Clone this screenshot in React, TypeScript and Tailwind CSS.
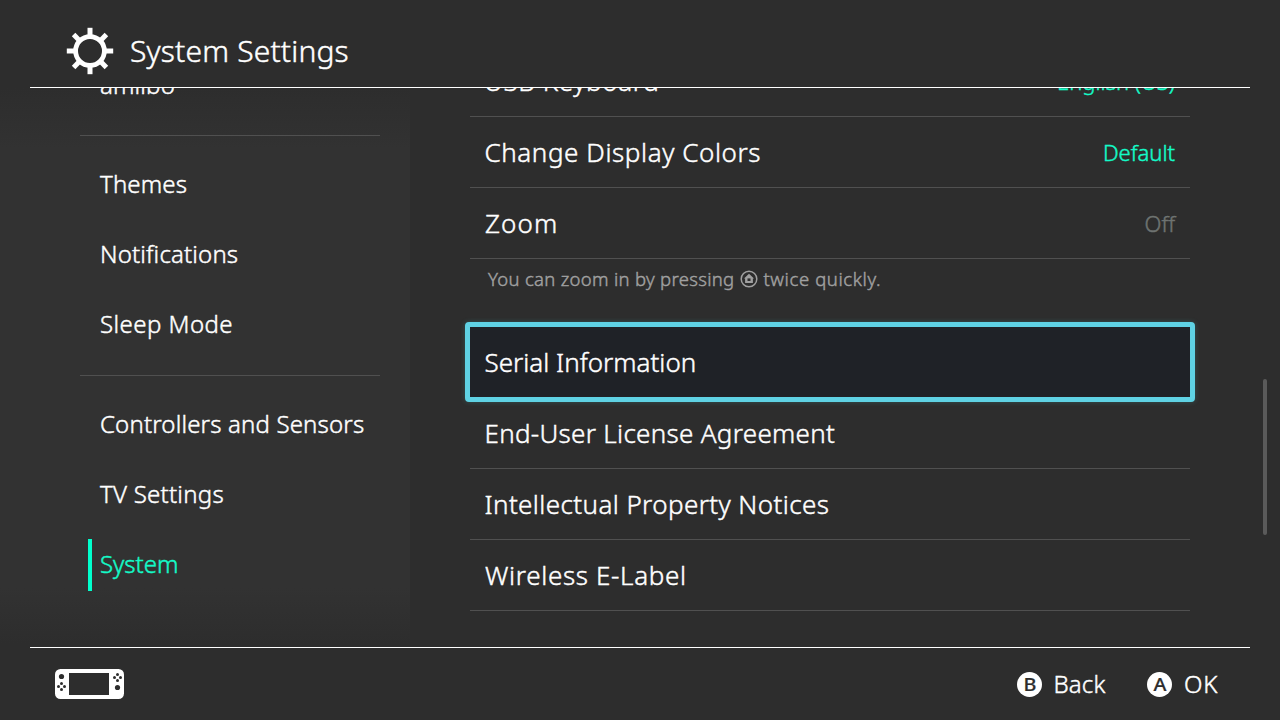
import type { ReactNode } from 'react';

type NavEntry = { label: string; text: string; active?: boolean } | { divider: true };

const nav: NavEntry[] = [
  { label: 'amiibo', text: 'pl-5 pt-0.5 tracking-[0.15px]' },
  { divider: true },
  { label: 'Themes', text: 'pl-5 tracking-[0.15px]' },
  { label: 'Notifications', text: 'pl-5 tracking-[0.16px]' },
  { label: 'Sleep Mode', text: 'pl-5 tracking-[0.45px]' },
  { divider: true },
  { label: 'Controllers and Sensors', text: 'pl-5 tracking-[0.16px]' },
  { label: 'TV Settings', text: 'pl-5 tracking-[0.25px]' },
  { label: 'System', text: 'pl-5 tracking-[0px]', active: true },
];

function Sidebar() {
  return (
    <nav className="h-full w-[410px] shrink-0 bg-[linear-gradient(to_bottom,#2d2d2d_0px,#323232_60px,#323232_500px,#2d2d2d_556px)] pl-20 text-2xl">
      <div className="-mt-[38px] w-[300px]">
        {nav.map((entry, i) =>
          'divider' in entry ? (
            <hr key={i} className="mt-[15px] mb-[14px] h-px border-0 bg-[#505050]" />
          ) : (
            <div key={i} className="relative flex h-[70px] items-center pb-0.5">
              {entry.active && <span className="absolute top-[9px] left-2 h-[52px] w-1 bg-[#00ffcc]" />}
              <span className={`${entry.text} whitespace-nowrap ${entry.active ? 'text-[#14fac8]' : ''}`}>{entry.label}</span>
            </div>
          ),
        )}
      </div>
    </nav>
  );
}

function Row({ label, text, children }: { label: string; text: string; children?: ReactNode }) {
  return (
    <div className="flex h-[71px] items-center justify-between border-b border-[#505050] pr-[15px]">
      <span className={`${text} whitespace-nowrap text-[26px]`}>{label}</span>
      {children}
    </div>
  );
}

function HomeGlyph() {
  return (
    <svg className="mr-[5px] ml-[6px] size-[18px]" viewBox="0 0 18 18" fill="none">
      <circle cx="9" cy="9" r="7.8" stroke="#a0a0a0" strokeWidth="1.5" />
      <path d="M9 3.8 L14 8.5 H12.9 V13 H5.1 V8.5 H4 Z" fill="#a0a0a0" />
      <rect x="7.5" y="8.4" width="3" height="2.6" fill="#2d2d2d" />
    </svg>
  );
}

function Gear() {
  return (
    <svg className="size-12" viewBox="-24 -24 48 48" fill="none" stroke="#fff">
      <circle r="14.4" strokeWidth="4.8" />
      {[0, 45, 90, 135, 180, 225, 270, 315].map((a) => (
        <path key={a} d="M0 -15 V-23.2" strokeWidth="5" transform={`rotate(${a})`} />
      ))}
    </svg>
  );
}

function Console() {
  return (
    <svg className="h-[30px] w-[70px]" viewBox="0 0 70 30" fill="#2d2d2d">
      <rect width="69" height="30" rx="5.5" fill="#fff" />
      <rect x="14" y="4" width="40" height="22" />
      <circle cx="6.5" cy="7.5" r="2.6" />
      <circle cx="62.5" cy="18.5" r="2.6" />
      {[[6.5, 14.5], [6.5, 20.5], [3.5, 17.5], [9.5, 17.5], [62.5, 5.5], [62.5, 11.5], [59.5, 8.5], [65.5, 8.5]].map(([x, y]) => (
        <circle key={`${x}-${y}`} cx={x} cy={y} r="1.5" />
      ))}
    </svg>
  );
}

function Key({ letter }: { letter: string }) {
  return (
    <span className="flex size-[25px] items-center justify-center rounded-full bg-white text-[18px] leading-none font-medium text-[#2d2d2d] [-webkit-text-stroke:0.2px]">
      <span className="scale-x-110">{letter}</span>
    </span>
  );
}

export default function App() {
  return (
    <div className="flex h-[720px] w-[1280px] flex-col overflow-hidden bg-[#2d2d2d] font-['Noto_Sans',sans-serif] font-light text-white [-webkit-text-stroke:0.45px]">
      <header className="mx-[30px] flex h-[88px] shrink-0 items-center border-b border-white pt-[14px] pl-9">
        <Gear />
        <h1 className="pl-4 text-[30px] tracking-[0.18px]">System Settings</h1>
      </header>

      <div className="flex h-[559px] shrink-0 overflow-hidden">
        <Sidebar />
        <main className="ml-[60px] w-[720px] shrink-0">
          <div className="-mt-[42px]">
            <Row label="USB Keyboard" text="pl-[14px] tracking-[0.65px]">
              <span className="text-[22px] text-[#14fac8]">English (US)</span>
            </Row>
            <Row label="Change Display Colors" text="pl-[14.5px] tracking-[0.58px]">
              <span className="text-[22px] text-[#14fac8]">Default</span>
            </Row>
            <Row label="Zoom" text="pl-[15px] tracking-[1.1px]">
              <span className="text-[22px] text-[#6e7371]">Off</span>
            </Row>
            <p className="flex h-[68px] items-start pt-[6px] pl-[18px] text-[18.5px] text-[#a0a0a0]">
              <span className="tracking-[0.3px]">You can zoom in by pressing</span>
              <span className="pt-[5px]">
                <HomeGlyph />
              </span>
              <span className="tracking-[0.6px]">twice quickly.</span>
            </p>
            <div className="relative -m-[5px] rounded-[4px] border-[5px] border-[#5fd2e4] bg-[#1f2227] shadow-[0_0_5px_rgba(70,200,200,0.25)]">
              <div className="flex h-[70px] items-center pl-[14.5px]">
                <span className="text-[26px]">Serial Information</span>
              </div>
            </div>
            <div className="mt-px">
              <Row label="End-User License Agreement" text="pl-[14.5px] tracking-[0.3px]" />
              <Row label="Intellectual Property Notices" text="pl-[14.5px] tracking-[0.4px]" />
              <Row label="Wireless E-Label" text="pl-[15px] tracking-[0.66px]" />
            </div>
          </div>
        </main>
        <div className="mt-[291px] ml-[73px] h-[156px] w-1 rounded-sm bg-[#5a5a5a]" />
      </div>

      <footer className="mx-[30px] flex h-[73px] shrink-0 items-center border-t border-white pr-[32px] pl-[25px] text-2xl">
        <Console />
        <div className="ml-auto flex items-center">
          <Key letter="B" />
          <span className="pl-[11px] tracking-[0.2px]">Back</span>
        </div>
        <div className="ml-[41.5px] flex items-center">
          <Key letter="A" />
          <span className="pl-[12px] tracking-[0.7px]">OK</span>
        </div>
      </footer>
    </div>
  );
}
